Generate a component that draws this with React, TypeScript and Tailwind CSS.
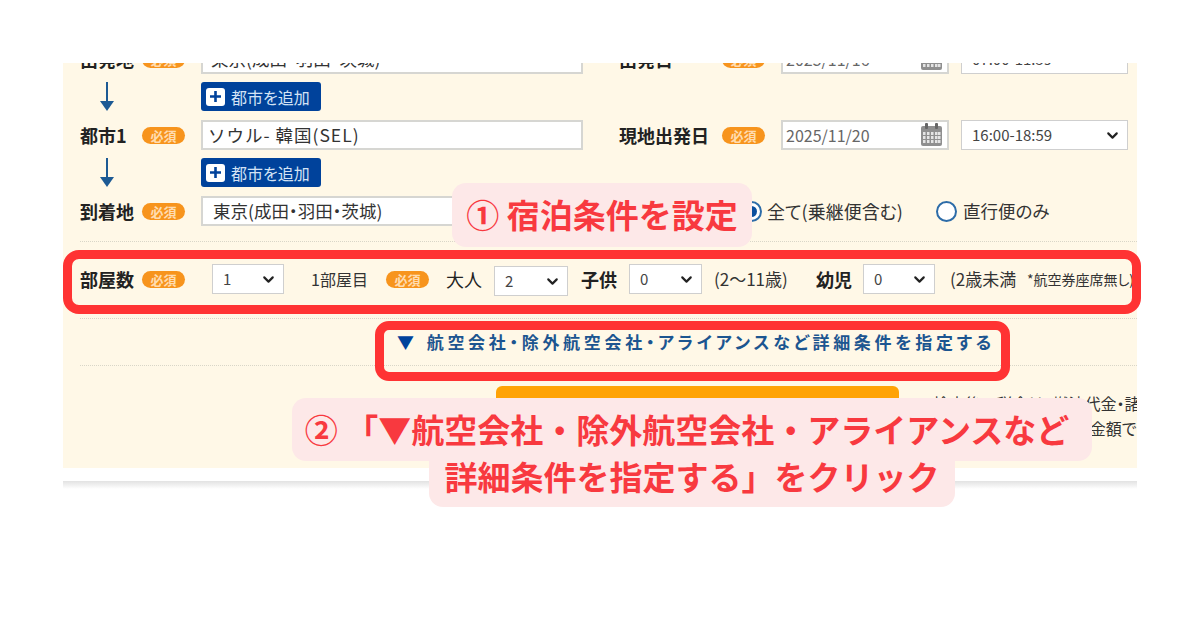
import { ChevronDown } from 'lucide-react';

const Badge = () => (
  <span className="inline-flex h-[17px] w-[43px] shrink-0 items-center justify-center rounded-full bg-[#f7941d] text-[13px] font-bold leading-none text-[#ffdcb0]">
    必須
  </span>
);

const TextBox = ({ text, className }: { text: string; className: string }) => (
  <div className={`flex h-[30px] items-center border-2 border-[#d6d6d2] bg-white text-[17.5px] text-[#333] ${className}`}>
    {text}
  </div>
);

const Select = ({ value, className }: { value: string; className: string }) => (
  <div className={`flex h-[30px] items-center justify-between border border-[#cfcfcf] bg-white pr-[6px] text-[15px] text-[#444] ${className}`}>
    <span>{value}</span>
    <ChevronDown size={17} strokeWidth={3} className="text-[#222]" />
  </div>
);

const CalendarIcon = () => (
  <svg width="23" height="24" viewBox="0 0 23 24" className="shrink-0">
    <rect x="1" y="3" width="21" height="20" rx="2" fill="#8f8f8f" />
    <rect x="5" y="0" width="3" height="6" rx="1" fill="#666" />
    <rect x="15" y="0" width="3" height="6" rx="1" fill="#666" />
    <g fill="#e4e4e4">
      {[9, 13, 17].map((y) =>
        [3, 7, 11, 15, 18].map((x) => <rect key={`${x}-${y}`} x={x} y={y} width="2.5" height="3" />),
      )}
    </g>
  </svg>
);

const DateBox = ({ value }: { value: string }) => (
  <div className="flex h-[30px] w-[168px] items-center justify-between border-2 border-[#d6d6d2] bg-white pl-[3px] pr-[4px] text-[16px] text-[#666]">
    <span>{value}</span>
    <CalendarIcon />
  </div>
);

const DownArrow = () => (
  <svg width="16" height="29" viewBox="0 0 16 29" className="ml-[19px] shrink-0">
    <path d="M8 0V20" stroke="#1d5a94" strokeWidth="2" />
    <path d="M1 19H15L8 29Z" fill="#1d5a94" />
  </svg>
);

const AddCity = () => (
  <div className="ml-[86px] flex h-[29px] w-[120px] items-center gap-[6px] rounded-[3px] bg-[#00429b] pl-[5px] text-[16px] text-[#d3e2f5]">
    <span className="flex h-[18px] w-[19px] items-center justify-center rounded-[3px] bg-white">
      <svg width="13" height="13" viewBox="0 0 13 13">
        <path d="M6.5 1V12M1 6.5H12" stroke="#00429b" strokeWidth="2.6" />
      </svg>
    </span>
    都市を追加
  </div>
);

const Label = ({ text, className }: { text: string; className: string }) => (
  <span className={`shrink-0 text-[18px] font-bold text-[#222] ${className}`}>{text}</span>
);

const Radio = ({ on, className }: { on?: boolean; className?: string }) => (
  <span className={`flex h-[21px] w-[21px] shrink-0 items-center justify-center rounded-full border-2 border-[#2d6ca8] bg-white ${className ?? ''}`}>
    {on && <span className="h-[11px] w-[11px] rounded-full bg-[#0b4f9e]" />}
  </span>
);

const Dots = () => <div className="border-t border-dotted border-[#d9d6c8]" />;

export default function App() {
  return (
    <div className="relative h-[630px] w-[1200px] overflow-hidden bg-white font-['Noto_Sans_CJK_JP',sans-serif] [font-feature-settings:'palt']">
      <div className="pt-[63px] pl-[63px]">
        <div className="h-[405px] w-[1074px] overflow-hidden bg-[#fff8e7] pl-[17px]">
          <div className="-mt-[19px] flex items-center">
            <Label text="出発地" className="w-[62px]" />
            <Badge />
            <TextBox text="東京(成田・羽田・茨城)" className="ml-[16px] w-[382px] pl-[8px]" />
            <Label text="出発日" className="ml-[36px] w-[103px]" />
            <Badge />
            <div className="ml-[16px]"><DateBox value="2025/11/16" /></div>
            <Select value="07:00-11:59" className="ml-[12px] w-[167px] pl-[10px]" />
          </div>

          <div className="mt-[8px] flex items-center">
            <DownArrow />
            <AddCity />
          </div>

          <div className="mt-[9px] flex items-center">
            <Label text="都市1" className="w-[62px]" />
            <Badge />
            <TextBox text="ソウル- 韓国(SEL)" className="ml-[16px] w-[382px] pl-[5px] tracking-[1px] [font-feature-settings:normal]" />
            <Label text="現地出発日" className="ml-[36px] w-[103px]" />
            <Badge />
            <div className="ml-[16px]"><DateBox value="2025/11/20" /></div>
            <Select value="16:00-18:59" className="ml-[12px] w-[167px] pl-[10px]" />
          </div>

          <div className="mt-[8px] flex items-center">
            <DownArrow />
            <AddCity />
          </div>

          <div className="mt-[9px] flex items-center">
            <Label text="到着地" className="w-[62px]" />
            <Badge />
            <TextBox text="東京(成田・羽田・茨城)" className="ml-[16px] w-[382px] pl-[10px]" />
            <Radio on className="ml-[158px]" />
            <span className="ml-[5px] w-[169px] shrink-0 text-[18px] text-[#333]">全て(乗継便含む)</span>
            <Radio />
            <span className="ml-[6px] text-[17.5px] text-[#333]">直行便のみ</span>
          </div>

          <div className="mt-[15px]"><Dots /></div>

          <div className="mt-[22px] flex items-center whitespace-nowrap text-[16px] text-[#333]">
            <Label text="部屋数" className="w-[62px]" />
            <Badge />
            <Select value="1" className="ml-[27px] w-[72px] pl-[10px]" />
            <span className="ml-[27px] w-[75px] shrink-0">1部屋目</span>
            <Badge />
            <span className="ml-[17px] w-[48px] shrink-0 text-[18px] text-[#222]">大人</span>
            <Select value="2" className="mt-[2px] -mb-[2px] w-[74px] pl-[10px]" />
            <Label text="子供" className="ml-[13px] w-[48px]" />
            <Select value="0" className="w-[73px] pl-[10px]" />
            <span className="ml-[12px] w-[102px] shrink-0 text-[17px]">(2〜11歳)</span>
            <Label text="幼児" className="w-[47px]" />
            <Select value="0" className="w-[72px] pl-[10px]" />
            <span className="ml-[15px] w-[77px] shrink-0 text-[17px]">(2歳未満</span>
            <span className="text-[14px]">*航空券座席無し)</span>
          </div>

          <div className="mt-[24px]"><Dots /></div>

          <div className="flex h-[46px] items-center whitespace-nowrap pl-[317px] text-[17px] font-bold tracking-[3.7px] text-[#1c5590]">
            <span className="mr-[9px] text-[#00429b]">▼</span>
            航空会社・除外航空会社・アライアンスなど詳細条件を指定する
          </div>

          <Dots />

          <div className="mt-[20px] flex gap-[18px]">
            <div className="ml-[416px] h-[60px] w-[403px] shrink-0 rounded-[6px] bg-[#ffa305]" />
            <div className="mt-[5px] w-[300px] shrink-0 whitespace-nowrap text-[16px] leading-[25px] text-[#333]">
              <div>※検索後の税金は、燃油代金・諸税</div>
              <div>航空券の総額を含む旅の金額で</div>
            </div>
          </div>
        </div>
        <div className="mt-[13px] h-[8px] w-[1074px] bg-gradient-to-b from-[#e2e2e2] to-white" />
      </div>

      <div className="absolute left-[63px] top-[250px] h-[64px] w-[1078px] rounded-[16px] border-[9px] border-[#ff3333]" />
      <div className="absolute left-[375px] top-[321px] h-[60px] w-[635px] rounded-[14px] border-[9px] border-[#ff3333]" />

      <div className="absolute left-[452px] top-[183px] flex h-[64px] w-[300px] items-center justify-center rounded-[14px] bg-[#fde8e8] text-[33px] font-bold text-[#f8393f] [font-feature-settings:normal]">
        ① 宿泊条件を設定
      </div>

      <div className="absolute left-[292px] top-[398px] flex w-[800px] flex-col items-center whitespace-nowrap text-[33px] font-bold text-[#f8393f] [font-feature-settings:normal]">
        <div className="flex h-[63px] w-full items-center justify-center rounded-[14px] bg-[#fde8e8] pr-[10px]">
          ② 「▼航空会社・除外航空会社・アライアンスなど
        </div>
        <div className="-mt-px flex h-[47px] w-[526px] items-center justify-center rounded-b-[14px] bg-[#fde8e8] pb-[14px]">
          詳細条件を指定する」をクリック
        </div>
      </div>
    </div>
  );
}
